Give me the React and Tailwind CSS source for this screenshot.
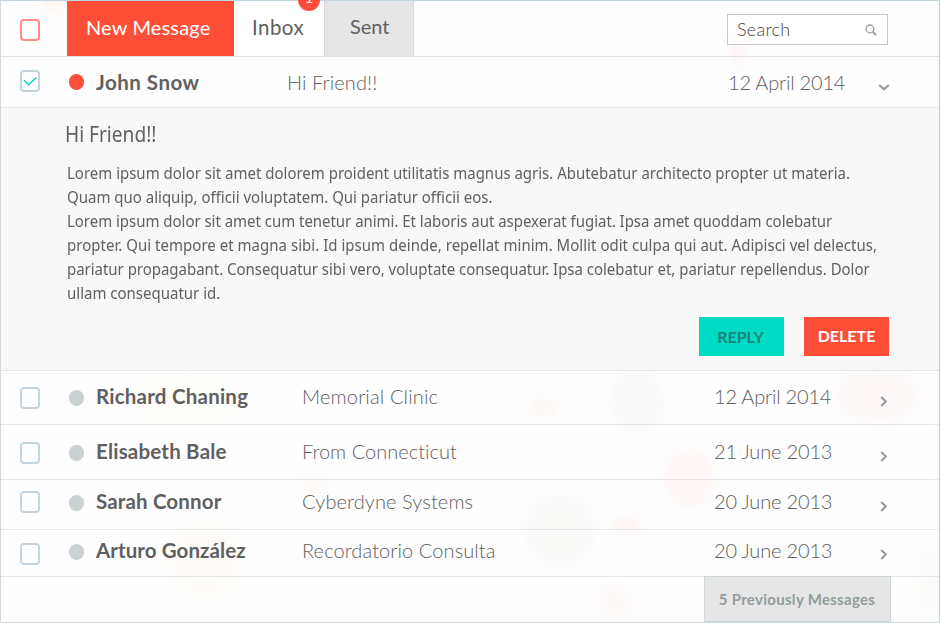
const box = "box-border h-[22px] w-5 shrink-0 rounded-[4px] border-2 bg-white";

function Chevron({ down, offset = "mt-[10px]" }) {
  return down ? (
    <svg className="mt-[12px] ml-[33px] h-[7px] w-[12px] shrink-0" viewBox="0 0 12 7" fill="none" stroke="#9a9d9f" strokeWidth="2.2">
      <path d="M1.2 1 L6 5.2 L10.8 1" />
    </svg>
  ) : (
    <svg className={`ml-12 h-[11px] w-[8px] shrink-0 ${offset}`} viewBox="0 0 8 11" fill="none" stroke="#9a9d9f" strokeWidth="2.2">
      <path d="M1.2 1 L5.8 5.5 L1.2 10" />
    </svg>
  );
}

const messages = [
  { name: "Richard Chaning", subject: "Memorial Clinic", date: "12 April 2014", row: "h-[54px] pt-[15px]", check: "mt-[1px]", ns: "tracking-[0.23px]", ss: "tracking-[0.15px]", ds: "tracking-[-0.2px]" },
  { name: "Elisabeth Bale", subject: "From Connecticut", date: "21 June 2013", row: "h-[55px] pt-[16px]", check: "mt-[1px]", ns: "tracking-[0.2px]", ss: "tracking-[0.02px]", ds: "tracking-[-0.17px]" },
  { name: "Sarah Connor", subject: "Cyberdyne Systems", date: "20 June 2013", row: "h-[50px] pt-[11px]", check: "mt-0", ns: "tracking-[0.15px]", ss: "tracking-[0.1px]", ds: "tracking-[-0.17px]" },
  { name: "Arturo González", subject: "Recordatorio Consulta", date: "20 June 2013", row: "h-[47px] pt-[10px]", check: "mt-[3px]", chevron: "mt-[9px]", ns: "tracking-[0.08px]", ss: "tracking-[0.1px]", ds: "tracking-[-0.17px]" },
];

const body = [
  ["Lorem ipsum dolor sit amet dolorem proident utilitatis magnus agris. Abutebatur architecto propter ut materia.", "tracking-[-0.01px]"],
  ["Quam quo aliquip, officii voluptatem. Qui pariatur officii eos.", "tracking-normal"],
  ["Lorem ipsum dolor sit amet cum tenetur animi. Et laboris aut aspexerat fugiat. Ipsa amet quoddam colebatur", "tracking-[-0.03px]"],
  ["propter. Qui tempore et magna sibi. Id ipsum deinde, repellat minim. Mollit odit culpa qui aut. Adipisci vel delectus,", "tracking-[0.03px]"],
  ["pariatur propagabant. Consequatur sibi vero, voluptate consequatur. Ipsa colebatur et, pariatur repellendus. Dolor", "tracking-[-0.025px]"],
  ["ullam consequatur id.", "tracking-normal"],
];

function Backdrop() {
  return (
    <svg className="absolute inset-0 h-full w-full" viewBox="0 0 940 623">
      <defs>
        <filter id="soft" x="-10%" y="-10%" width="120%" height="120%"><feGaussianBlur stdDeviation="5" /></filter>
      </defs>
      <g filter="url(#soft)" opacity="0.6">
        <ellipse cx="52" cy="4" rx="11" ry="8" fill="#fdf3ea" />
        <ellipse cx="738" cy="50" rx="9" ry="16" fill="#fff0f0" />
        <ellipse cx="637" cy="402" rx="27" ry="30" fill="#f7f7f6" />
        <ellipse cx="543" cy="407" rx="13" ry="9" fill="#fff3ef" />
        <ellipse cx="689" cy="478" rx="25" ry="29" fill="#fff3f1" />
        <ellipse cx="560" cy="531" rx="35" ry="37" fill="#f7f8f5" />
        <ellipse cx="627" cy="526" rx="14" ry="9" fill="#fff0ee" />
        <ellipse cx="878" cy="396" rx="42" ry="27" fill="#fdf5f4" />
        <ellipse cx="205" cy="560" rx="38" ry="42" fill="#fffcf7" />
        <ellipse cx="190" cy="400" rx="55" ry="30" fill="#fffef9" />
        <ellipse cx="313" cy="485" rx="12" ry="12" fill="#fff8f5" />
        <ellipse cx="615" cy="602" rx="18" ry="16" fill="#fdf7f4" />
        <ellipse cx="930" cy="580" rx="14" ry="32" fill="#fafcf7" />
      </g>
    </svg>
  );
}

export default function App() {
  return (
    <div className="relative h-[623px] w-[940px] overflow-hidden bg-[#fefefe] font-['Lato',sans-serif] text-[20px] leading-5 whitespace-nowrap text-[#606060]">
      <Backdrop />
      <div className="relative flex h-[623px] flex-col border border-t-[#c5d5df] border-r-[#b9cdd6] border-b-[#cfd5d6] border-l-[#d5d8da]">
        <header className="flex h-14 border-b border-[#dce2e5]">
          <div className="w-[66px] pt-[18px] pl-[19px]">
            <div className={`${box} border-[#ff8c88]`} />
          </div>
          <button className="flex w-[167px] bg-[#ff4e38] pt-[16px] pl-[19px] text-white">
            <span className="tracking-[0.15px]">New Message</span>
          </button>
          <div className="relative w-[91px] border-r border-[#d3dbdf] bg-white pt-[16px] pl-[18px]">
            <span className="text-[20.5px] tracking-[0.45px]">Inbox</span>
            <span className="absolute -top-[12px] left-[64px] flex h-[22px] w-[22px] items-center justify-center rounded-full bg-[#ff4e38] pb-1 text-[14px] text-white">1</span>
          </div>
          <div className="w-[89px] border-r border-[#d3dbdf] bg-[#e6e6e6] pt-[15px] pl-[25px]">Sent</div>
          <div className="mt-[13px] ml-auto mr-[51px] flex h-[31px] w-[161px] border border-[#c4c8ca] bg-white/50 pt-[4px] pl-[9px] text-[18px] font-light text-[#444]">
            <span className="tracking-[0.25px]">Search</span>
            <svg className="mt-[5px] mr-[10px] ml-auto h-3 w-3" viewBox="0 0 12 12" fill="none" stroke="#9c9fa0">
              <circle cx="4.9" cy="4.9" r="3.9" strokeWidth="1.3" />
              <path d="M7.8 7.8 L11 11" strokeWidth="2.2" />
            </svg>
          </div>
        </header>

        <div className="flex h-[51px] items-start border-b border-[#e4e9eb] pt-[15px] pl-[19px]">
          <div className={`${box} -mt-[2px] border-[#c3d4dc]`}>
            <svg className="h-[18px] w-4" viewBox="0 0 16 18" fill="none" stroke="#00d6bd" strokeWidth="1.5">
              <path d="M2 8.3 L6.5 12.8 L14.2 5.5" />
            </svg>
          </div>
          <span className="mt-[2px] ml-[29px] h-4 w-[15px] rounded-full bg-[#ff4e38]" />
          <span className="ml-3 w-[191px] text-[20.5px] font-bold tracking-[0.5px]">John Snow</span>
          <span className="w-[441px] font-light tracking-[0.1px]">Hi Friend!!</span>
          <span className="w-[117px] font-light tracking-[-0.2px]">12 April 2014</span>
          <Chevron down />
        </div>

        <section className="h-[263px] border-b border-[#e2e5e6] bg-[#f8f8f8] pl-16 font-['Noto_Sans',sans-serif]">
          <h2 className="origin-left scale-x-[0.91] pt-[14px] text-[21px] leading-6">Hi Friend!!</h2>
          <div className="mt-[15px] ml-[2px] w-[860px] origin-left scale-x-[0.937] text-[16px] leading-6">
            {body.map(([text, spacing]) => (
              <p key={text} className={spacing}>{text}</p>
            ))}
          </div>
          <div className="mt-[12px] flex gap-5 pl-[634px] font-['Lato',sans-serif] text-[16px] font-bold">
            <button className="h-[39px] w-[85px] bg-[#00dcc3] pt-px pr-[2px] text-[#158578]">REPLY</button>
            <button className="h-[39px] w-[85px] bg-[#ff4e38] pb-[2px] text-white">DELETE</button>
          </div>
        </section>

        {messages.map((m) => (
          <div key={m.name} className={`flex items-start border-b border-[#e4e8ea] pl-[19px] ${m.row}`}>
            <div className={`${box} border-[#c3d6df] ${m.check}`} />
            <span className="mt-[4px] ml-[29px] h-4 w-[15px] rounded-full bg-[#c9d1d2]" />
            <span className={`ml-3 w-[206px] text-[20.5px] font-bold ${m.ns}`}>{m.name}</span>
            <span className={`w-[412px] font-light ${m.ss}`}>{m.subject}</span>
            <span className={`w-[118px] font-light ${m.ds}`}>{m.date}</span>
            <Chevron offset={m.chevron} />
          </div>
        ))}

        <button className="-mt-px mr-12 h-[46px] w-[187px] self-end border border-[#ced8dc] bg-[#e6e6e6] pr-px pb-px text-[15px] font-bold tracking-[0.3px] text-[#929c9d]">
          5 Previously Messages
        </button>
      </div>
    </div>
  );
}
